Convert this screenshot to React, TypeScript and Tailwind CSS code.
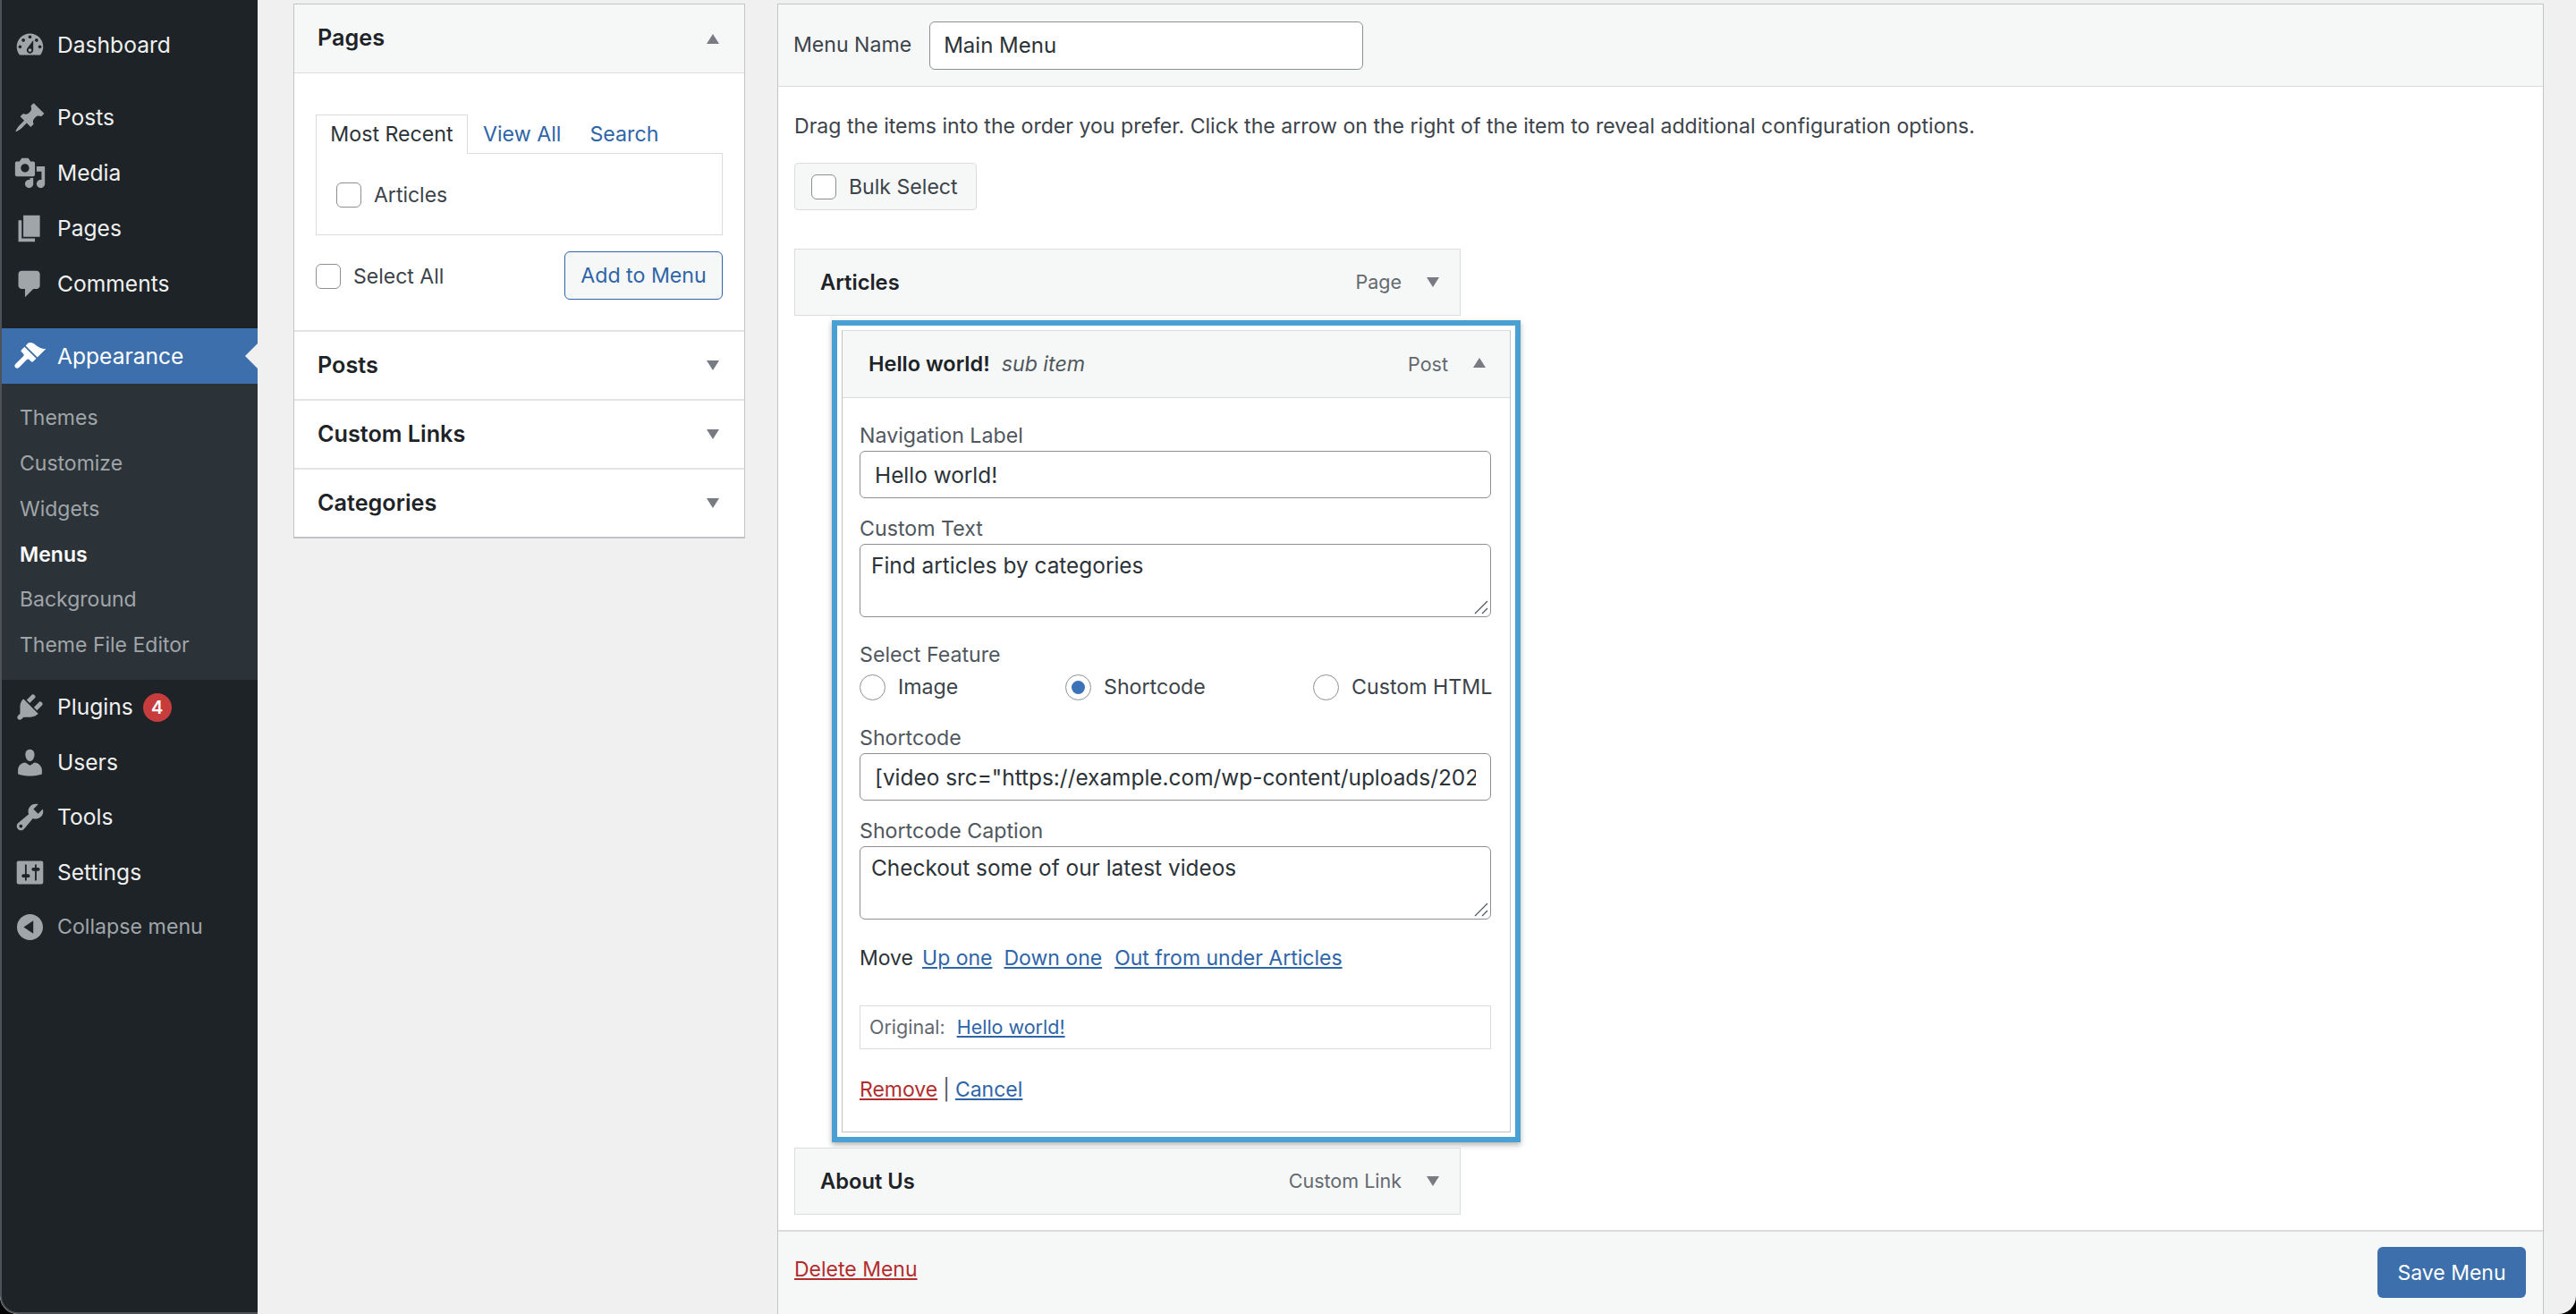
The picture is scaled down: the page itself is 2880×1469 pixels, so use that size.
import React from "react";

const ICONS: Record<string, string> = {
  dashboard: "M3.76 16h12.48c1.1-1.37 1.76-3.11 1.76-5 0-4.42-3.58-8-8-8s-8 3.58-8 8c0 1.89.66 3.63 1.76 5zM10 4c.55 0 1 .45 1 1s-.45 1-1 1-1-.45-1-1 .45-1 1-1zM6 6c.55 0 1 .45 1 1s-.45 1-1 1-1-.45-1-1 .45-1 1-1zm8 0c.55 0 1 .45 1 1s-.45 1-1 1-1-.45-1-1 .45-1 1-1zm-5.37 5.55L12 7v6c0 1.1-.9 2-2 2s-2-.9-2-2c0-.57.24-1.08.63-1.45zM4 10c.55 0 1 .45 1 1s-.45 1-1 1-1-.45-1-1 .45-1 1-1zm12 0c.55 0 1 .45 1 1s-.45 1-1 1-1-.45-1-1 .45-1 1-1zm-5 3c0-.55-.45-1-1-1s-1 .45-1 1 .45 1 1 1 1-.45 1-1z",
  posts: "M10.44 3.02l1.82-1.82 6.36 6.35-1.83 1.82c-1.05-.68-2.48-.57-3.41.36l-.75.75c-.92.93-1.04 2.35-.35 3.41l-1.83 1.82-2.41-2.41-2.8 2.79c-.42.42-3.38 2.71-3.8 2.29s1.86-3.39 2.28-3.81l2.79-2.79L4.1 9.36l1.83-1.82c1.05.69 2.48.57 3.4-.36l.75-.75c.93-.92 1.05-2.35.36-3.41z",
  media: "M13 11V4c0-.55-.45-1-1-1h-1.67L9 1H5L3.67 3H2c-.55 0-1 .45-1 1v7c0 .55.45 1 1 1h10c.55 0 1-.45 1-1zM7 4.5c1.38 0 2.5 1.12 2.5 2.5S8.38 9.5 7 9.5 4.5 8.38 4.5 7 5.62 4.5 7 4.5zM14 6h5v10.5c0 1.38-1.12 2.5-2.5 2.5S14 17.88 14 16.5s1.12-2.5 2.5-2.5c.17 0 .34.02.5.05V9h-3V6zm-4 8.05V13h2v3.5c0 1.38-1.12 2.5-2.5 2.5S7 17.88 7 16.5 8.12 14 9.5 14c.17 0 .34.02.5.05z",
  pages: "M6 15V2h10v13H6zm-1 1h8v2H3V5h2v11z",
  comments: "M5 2h9c1.1 0 2 .9 2 2v7c0 1.1-.9 2-2 2h-2l-5 5v-5H5c-1.1 0-2-.9-2-2V4c0-1.1.9-2 2-2z",
  appearance: "M14.48 11.06L7.41 3.99l1.5-1.5c.5-.56 2.3-.47 3.51.32 1.21.8 1.43 1.28 2.91 2.1 1.18.64 2.45 1.26 4.45.85zm-.71.71L6.7 4.7 4.93 6.47c-.39.39-.39 1.02 0 1.41l1.06 1.06c.39.39.39 1.03 0 1.41l-4.8 4.8c-.59.59-.59 1.54 0 2.12s1.54.59 2.12 0l4.8-4.8c.39-.39 1.03-.39 1.42 0l1.06 1.06c.39.39 1.02.39 1.41 0z",
  plugins: "M13.11 4.36L9.87 7.6 8 5.73l3.24-3.24c.35-.34 1.05-.2 1.56.32.52.51.66 1.21.31 1.55zm-8 1.77l.91-1.12 9.01 9.01-1.19.84c-.71.71-2.63 1.16-3.82 1.16H6.14L4.9 17.26c-.59.59-1.54.59-2.12 0-.59-.58-.59-1.53 0-2.12l1.24-1.24v-3.88c0-1.13.4-3.19 1.09-3.89zm7.26 3.97l3.24-3.24c.34-.35 1.04-.21 1.55.31.52.51.66 1.21.31 1.55l-3.24 3.25z",
  users: "M10 9.25c-2.27 0-2.73-3.44-2.73-3.44C7 4.02 7.82 2 9.97 2c2.16 0 2.98 2.02 2.71 3.81 0 0-.41 3.44-2.68 3.44zm0 2.57L12.72 10c2.39 0 4.52 2.33 4.52 4.53v2.49s-3.65 1.13-7.24 1.13c-3.65 0-7.24-1.13-7.24-1.13v-2.49c0-2.25 1.94-4.48 4.47-4.48z",
  tools: "M16.68 9.77c-1.34 1.34-3.3 1.67-4.95.99l-5.41 6.52c-.99.99-2.59.99-3.58 0s-.99-2.59 0-3.57l6.52-5.42c-.68-1.65-.35-3.61.99-4.95 1.28-1.28 3.12-1.62 4.72-1.06l-2.89 2.89 2.82 2.82 2.86-2.87c.53 1.58.18 3.39-1.08 4.65zM3.81 16.21c.4.39 1.04.39 1.43 0 .4-.4.4-1.04 0-1.43-.39-.4-1.03-.4-1.43 0-.39.39-.39 1.03 0 1.43z",
  settings: "M18 16V4c0-.55-.45-1-1-1H3c-.55 0-1 .45-1 1v12c0 .55.45 1 1 1h14c.55 0 1-.45 1-1zM8 11h1c.55 0 1 .45 1 1s-.45 1-1 1H8v1.5c0 .28-.22.5-.5.5s-.5-.22-.5-.5V13H6c-.55 0-1-.45-1-1s.45-1 1-1h1V5.5c0-.28.22-.5.5-.5s.5.22.5.5V11zm5-2h-1c-.55 0-1-.45-1-1s.45-1 1-1h1V5.5c0-.28.22-.5.5-.5s.5.22.5.5V7h1c.55 0 1 .45 1 1s-.45 1-1 1h-1v5.5c0 .28-.22.5-.5.5s-.5-.22-.5-.5V9z",
  collapse: "M10 2.16c4.33 0 7.84 3.51 7.84 7.84s-3.51 7.84-7.84 7.84S2.16 14.33 2.16 10 5.71 2.16 10 2.16zm2 11.72V6.12L6.18 9.97z",
};

function Icon({ name, white }: { name: string; white?: boolean }) {
  return (
    <svg viewBox="0 0 20 20" className={`w-[37px] h-[37px] shrink-0 ${white ? "text-white" : "text-[#a0a5aa]"}`} fill="currentColor">
      <path d={ICONS[name]} />
    </svg>
  );
}

function MenuRow({ icon, label, badge, dim, tall }: { icon: string; label: string; badge?: string; dim?: boolean; tall?: boolean }) {
  return (
    <div className={`flex items-center pl-[13px] ${tall ? "h-[61.8px]" : "h-[61.5px]"} ${dim ? "text-[23.2px] text-[#a0a5aa]" : "text-[24.6px] text-[#f0f0f1]"}`}>
      <Icon name={icon} />
      <span className="ml-[12px]">{label}</span>
      {badge && (
        <span className="ml-[11px] w-[32px] h-[32px] rounded-full bg-[#c73c3c] text-white text-[20px] font-semibold flex items-center justify-center">
          {badge}
        </span>
      )}
    </div>
  );
}

function SubRow({ label, active }: { label: string; active?: boolean }) {
  return (
    <div className={`h-[50.8px] flex items-center pl-[20px] text-[23px] ${active ? "text-white font-semibold" : "text-[#a0a5aa]"}`}>
      {label}
    </div>
  );
}

function Sidebar() {
  return (
    <aside className="w-[288px] h-full shrink-0 bg-[#1d2327] border-l-2 border-b-2 border-[#4c5257] rounded-bl-[20px] pt-[20px] flex flex-col">
      <MenuRow tall icon="dashboard" label="Dashboard" />
      <div className="h-[19px]" />
      <MenuRow tall icon="posts" label="Posts" />
      <MenuRow tall icon="media" label="Media" />
      <MenuRow tall icon="pages" label="Pages" />
      <MenuRow tall icon="comments" label="Comments" />
      <div className="h-[19px]" />
      <div className="relative flex items-center h-[62px] pl-[13px] text-[24.6px] text-white bg-[#3c6fab]">
        <Icon name="appearance" white />
        <span className="ml-[12px]">Appearance</span>
        <span className="absolute right-0 top-[17px] w-0 h-0 border-y-[14px] border-y-transparent border-r-[14px] border-r-[#f0f0f1]" />
      </div>
      <div className="bg-[#2c3338] pt-[13px] pb-[13px]">
        <SubRow label="Themes" />
        <SubRow label="Customize" />
        <SubRow label="Widgets" />
        <SubRow label="Menus" active />
        <SubRow label="Background" />
        <SubRow label="Theme File Editor" />
      </div>
      <MenuRow icon="plugins" label="Plugins" badge="4" />
      <MenuRow icon="users" label="Users" />
      <MenuRow icon="tools" label="Tools" />
      <MenuRow icon="settings" label="Settings" />
      <MenuRow icon="collapse" label="Collapse menu" dim />
    </aside>
  );
}

function Arrow({ up, className = "" }: { up?: boolean; className?: string }) {
  return (
    <span
      className={`inline-block w-0 h-0 border-x-[7px] border-x-transparent ${up ? "border-b-[11px] border-b-[#787c82]" : "border-t-[11px] border-t-[#787c82]"} ${className}`}
    />
  );
}

function Check({ className = "" }: { className?: string }) {
  return <span className={`block shrink-0 w-[28px] h-[28px] rounded-[6px] border border-[#8c8f94] bg-white ${className}`} />;
}

function Accordion({ title, h }: { title: string; h: string }) {
  return (
    <div className={`flex items-center justify-between pl-[26px] pr-[28px] border-t-2 border-[#e3e4e6] bg-white ${h}`}>
      <span className="text-[25.2px] font-semibold text-[#1d2327]">{title}</span>
      <Arrow />
    </div>
  );
}

function LeftPanel() {
  return (
    <div className="w-[505px] ml-[40px] mt-[4px] shrink-0 self-start border border-[#c3c4c7] border-b-2 bg-white">
      <div className="h-[77px] bg-[#f6f7f7] border-b border-[#dcdcde] flex items-center justify-between pl-[26px] pr-[28px]">
        <span className="text-[25.2px] font-semibold text-[#1d2327]">Pages</span>
        <Arrow up />
      </div>
      <div className="px-[24px] pt-[46px] h-[287px]">
        <div className="flex h-[44px] text-[23.2px]">
          <div className="relative z-10 w-[170px] h-[44px] border border-b-0 border-[#dcdcde] bg-white flex items-center justify-center text-[#2c3338]">Most Recent</div>
          <span className="ml-[17px] flex items-center text-[#2f65a8]">View All</span>
          <span className="ml-[32px] flex items-center text-[#2f65a8]">Search</span>
        </div>
        <div className="-mt-px h-[92px] w-[455px] border border-[#dcdcde] flex items-center pl-[22px] pt-[2px] text-[23px] text-[#3c434a]">
          <Check />
          <span className="ml-[14px]">Articles</span>
        </div>
        <div className="mt-[18px] w-[455px] flex items-center justify-between">
          <div className="flex items-center pt-[2px] text-[23px] text-[#3c434a]">
            <Check />
            <span className="ml-[14px]">Select All</span>
          </div>
          <div className="w-[177px] h-[54px] rounded-[6px] border-[1.5px] border-[#2f65a8] bg-[#f6f7f7] text-[#2f65a8] text-[23.2px] flex items-center justify-center">
            Add to Menu
          </div>
        </div>
      </div>
      <Accordion title="Posts" h="h-[77px]" />
      <Accordion title="Custom Links" h="h-[77px]" />
      <Accordion title="Categories" h="h-[77px]" />
    </div>
  );
}

function ItemBar({ title, kind }: { title: string; kind: string }) {
  return (
    <div className="w-[745px] h-[75px] bg-[#f6f7f7] border border-[#dcdcde] flex items-center pl-[28px] pr-[23px]">
      <span className="text-[23.7px] font-semibold text-[#1d2327]">{title}</span>
      <span className="ml-auto text-[21.5px] text-[#646970]">{kind}</span>
      <Arrow className="ml-[28px]" />
    </div>
  );
}

const labelCls = "h-[30px] flex items-center text-[23.2px] text-[#50575e]";
const fieldCls = "block w-[706px] rounded-[6px] border border-[#8c8f94] bg-white text-[24.4px] text-[#2c3338] outline-none";
const linkCls = "text-[#2f65a8] underline";

function Radio({ label, on, className = "" }: { label: string; on?: boolean; className?: string }) {
  return (
    <div className={`flex items-center shrink-0 whitespace-nowrap ${className}`}>
      <span className="w-[29px] h-[29px] rounded-full border border-[#8c8f94] bg-white flex items-center justify-center shrink-0">
        {on && <span className="w-[15px] h-[15px] rounded-full bg-[#3c72b8]" />}
      </span>
      <span className="ml-[14px] text-[#3c434a]">{label}</span>
    </div>
  );
}

function Area({ value, className = "" }: { value: string; className?: string }) {
  return (
    <div className={`relative w-[706px] ${className}`}>
      <textarea readOnly value={value} className={`${fieldCls} h-[82px] px-[12px] py-[5px] leading-[36px] resize-none`} />
      <svg viewBox="0 0 16 16" className="absolute right-[3px] bottom-[3px] w-[16px] h-[16px]" stroke="#50575e" strokeWidth="1.2" fill="none">
        <path d="M1 15 L15 1 M9 15 L15 9" />
      </svg>
    </div>
  );
}

function OpenItem() {
  return (
    <div className="ml-[42px] mt-[5px] w-[770px] border-[6px] border-[#4a9fd3] bg-white p-[5px] shadow-[0_3px_6px_rgba(0,0,0,0.3)]">
      <div className="border border-[#dcdcde] border-b-[#c3c4c7] border-x-[#c3c4c7] h-[897px]">
        <div className="h-[75px] bg-[#f6f7f7] border-b border-[#dcdcde] flex items-center pl-[29px] pr-[27px]">
          <span className="text-[23.5px] font-semibold text-[#1d2327]">Hello world!</span>
          <span className="ml-[13px] text-[23.2px] italic text-[#50575e]">sub item</span>
          <span className="ml-auto text-[21.5px] text-[#646970]">Post</span>
          <Arrow up className="ml-[28px] -mt-[3px]" />
        </div>
        <div className="pl-[19px]">
          <div className={`${labelCls} mt-[27px]`}>Navigation Label</div>
          <input readOnly value="Hello world!" className={`${fieldCls} h-[53px] mt-[2px] px-[16px]`} />
          <div className={`${labelCls} mt-[19px]`}>Custom Text</div>
          <Area value="Find articles by categories" className="mt-[2px]" />
          <div className={`${labelCls} mt-[27px]`}>Select Feature</div>
          <div className="mt-[7px] w-[706px] h-[28px] flex items-center text-[23.2px]">
            <Radio label="Image" className="w-[230px]" />
            <Radio label="Shortcode" on className="w-[277px]" />
            <Radio label="Custom HTML" />
          </div>
          <div className={`${labelCls} mt-[28px]`}>Shortcode</div>
          <input readOnly value={'[video src="https://example.com/wp-content/uploads/202'} className={`${fieldCls} h-[53px] mt-[2px] px-[16px]`} />
          <div className={`${labelCls} mt-[19px]`}>Shortcode Caption</div>
          <Area value="Checkout some of our latest videos" className="mt-[2px]" />
          <div className="mt-[28px] h-[30px] flex items-center text-[23px] text-[#2c3338]">
            <span>Move</span>
            <span className={`ml-[10px] ${linkCls}`}>Up one</span>
            <span className={`ml-[13px] ${linkCls}`}>Down one</span>
            <span className={`ml-[14px] ${linkCls}`}>Out from under Articles</span>
          </div>
          <div className="mt-[38px] w-[706px] h-[49px] border border-[#dcdcde] flex items-center pl-[10px] text-[21.5px] text-[#646970]">
            <span>Original:</span>
            <span className={`ml-[13px] ${linkCls}`}>Hello world!</span>
          </div>
          <div className="mt-[30px] h-[30px] flex items-center text-[23px] text-[#50575e]">
            <span className="text-[#b32d2e] underline">Remove</span>
            <span className="mx-[6px]">|</span>
            <span className={linkCls}>Cancel</span>
          </div>
        </div>
      </div>
    </div>
  );
}

function MainPanel() {
  return (
    <div className="ml-[36px] mt-[4px] w-[1975px] flex flex-col border-x border-t border-[#c3c4c7] bg-white h-[1470px] shrink-0">
      <div className="h-[92px] bg-[#f6f7f7] border-b border-[#dcdcde] flex items-center pl-[17px] shrink-0">
        <span className="text-[23.1px] text-[#3c434a]">Menu Name</span>
        <input readOnly value="Main Menu" className="ml-[20px] w-[485px] h-[54px] rounded-[6px] border border-[#8c8f94] bg-white px-[15px] text-[24px] text-[#2c3338] outline-none" />
      </div>
      <div className="flex-1 pl-[18px] min-h-0">
        <div className="mt-[29px] h-[30px] flex items-center text-[23.1px] text-[#3c434a]">
          Drag the items into the order you prefer. Click the arrow on the right of the item to reveal additional configuration options.
        </div>
        <div className="mt-[26px] w-[204px] h-[53px] bg-[#f6f7f7] border border-[#dcdcde] rounded-[4px] flex items-center pl-[18px] text-[23.1px] text-[#3c434a]">
          <Check />
          <span className="ml-[14px] mt-[2px]">Bulk Select</span>
        </div>
        <div className="mt-[43px]">
          <ItemBar title="Articles" kind="Page" />
        </div>
        <OpenItem />
        <div className="mt-[6px]">
          <ItemBar title="About Us" kind="Custom Link" />
        </div>
      </div>
      <div className="h-[99px] shrink-0 border-t-2 border-[#dcdcde] bg-[#f6f7f7] flex items-start justify-between pl-[18px] pr-[19px]">
        <span className="mt-[25px] text-[23px] text-[#b32d2e] underline">Delete Menu</span>
        <div className="mt-[17px] w-[166px] h-[57px] pt-[1px] rounded-[6px] bg-[#3c6fab] text-white text-[23px] flex items-center justify-center">
          Save Menu
        </div>
      </div>
    </div>
  );
}

export default function App() {
  return (
    <div className="w-[2880px] h-[1469px] bg-black overflow-hidden" style={{ fontFamily: "Inter, 'Liberation Sans', sans-serif" }}>
      <div className="w-full h-full flex overflow-hidden rounded-b-[20px] bg-[#f0f0f1]">
        <Sidebar />
        <LeftPanel />
        <MainPanel />
      </div>
    </div>
  );
}
